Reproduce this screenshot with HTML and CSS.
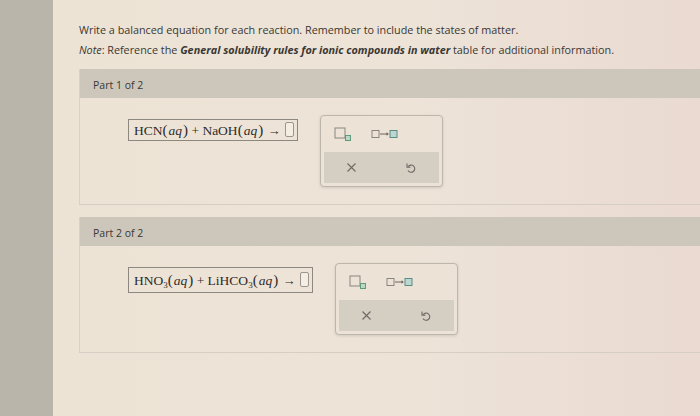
FILE: index.html
```html
<!DOCTYPE html>
<html lang="en">
<head>
    <meta charset="UTF-8">
    <title>Balanced equations</title>
    <link rel="stylesheet" href="styles.css">
</head>
<body>
    <div class="side"></div>
    <div class="main">
        <p class="intro">Write a balanced equation for each reaction. Remember to include the states of matter.</p>
        <p class="intro"><i>Note</i>: Reference the <b><i>General solubility rules for ionic compounds in water</i></b> table for additional information.</p>

        <div class="part">
            <div class="part-head">Part 1 of 2</div>
            <div class="part-body">
                <div class="equation">HCN<span class="paren">(</span><i>aq</i><span class="paren">)</span> + NaOH<span class="paren">(</span><i>aq</i><span class="paren">)</span> <span class="arrow">&rarr;</span> <span class="slot"></span></div>
                <div class="tools">
                    <div class="tools-top">
                        <svg width="18" height="15" viewBox="0 0 18 15">
                            <rect x="1" y="1" width="10" height="10" fill="none" stroke="#8a857e" stroke-width="1"/>
                            <rect x="11.5" y="8.5" width="5" height="5" fill="#bcd6c8" stroke="#5c9c7c" stroke-width="1"/>
                        </svg>
                        <svg width="28" height="10" viewBox="0 0 28 10">
                            <rect x="1" y="1.5" width="7" height="7" fill="none" stroke="#8a857e" stroke-width="1"/>
                            <path d="M9 5h8" stroke="#6a655e" stroke-width="1"/>
                            <path d="M15.5 3.3l2.4 1.7-2.4 1.7z" fill="#6a655e"/>
                            <rect x="19" y="1.5" width="7" height="7" fill="#bcd6d2" stroke="#5c8c88" stroke-width="1"/>
                        </svg>
                    </div>
                    <div class="tools-bottom">
                        <svg width="11" height="11" viewBox="0 0 11 11">
                            <path d="M1.5 1.5l8 8M9.5 1.5l-8 8" stroke="#6d6963" stroke-width="1.1"/>
                        </svg>
                        <svg width="12" height="12" viewBox="0 0 12 12">
                            <path d="M3.2 4.6A3.6 3.6 0 1 1 3 8.4" fill="none" stroke="#6d6963" stroke-width="1.1"/>
                            <path d="M2 1.6v3.6h3.4" fill="none" stroke="#6d6963" stroke-width="1.1"/>
                        </svg>
                    </div>
                </div>
            </div>
        </div>

        <div class="part">
            <div class="part-head">Part 2 of 2</div>
            <div class="part-body">
                <div class="equation eq-wide">HNO<sub>3</sub><span class="paren">(</span><i>aq</i><span class="paren">)</span> + LiHCO<sub>3</sub><span class="paren">(</span><i>aq</i><span class="paren">)</span> <span class="arrow">&rarr;</span> <span class="slot"></span></div>
                <div class="tools">
                    <div class="tools-top">
                        <svg width="18" height="15" viewBox="0 0 18 15">
                            <rect x="1" y="1" width="10" height="10" fill="none" stroke="#8a857e" stroke-width="1"/>
                            <rect x="11.5" y="8.5" width="5" height="5" fill="#bcd6c8" stroke="#5c9c7c" stroke-width="1"/>
                        </svg>
                        <svg width="28" height="10" viewBox="0 0 28 10">
                            <rect x="1" y="1.5" width="7" height="7" fill="none" stroke="#8a857e" stroke-width="1"/>
                            <path d="M9 5h8" stroke="#6a655e" stroke-width="1"/>
                            <path d="M15.5 3.3l2.4 1.7-2.4 1.7z" fill="#6a655e"/>
                            <rect x="19" y="1.5" width="7" height="7" fill="#bcd6d2" stroke="#5c8c88" stroke-width="1"/>
                        </svg>
                    </div>
                    <div class="tools-bottom">
                        <svg width="11" height="11" viewBox="0 0 11 11">
                            <path d="M1.5 1.5l8 8M9.5 1.5l-8 8" stroke="#6d6963" stroke-width="1.1"/>
                        </svg>
                        <svg width="12" height="12" viewBox="0 0 12 12">
                            <path d="M3.2 4.6A3.6 3.6 0 1 1 3 8.4" fill="none" stroke="#6d6963" stroke-width="1.1"/>
                            <path d="M2 1.6v3.6h3.4" fill="none" stroke="#6d6963" stroke-width="1.1"/>
                        </svg>
                    </div>
                </div>
            </div>
        </div>
    </div>
</body>
</html>
```

FILE: styles.css
```css
html, body {
    margin: 0;
    height: 100%;
}
body {
    display: flex;
    font-family: "Open Sans", sans-serif;
    color: #3a3733;
    background: linear-gradient(90deg, #ece3d5 0%, #ede3d7 60%, #eadad2 100%);
    overflow: hidden;
}
.side {
    width: 53px;
    flex: none;
    background: #bab5aa;
}
.main {
    flex: 1;
    padding: 22px 0 0 26px;
}
.intro {
    margin: 0 0 5px;
    font-size: 10.8px;
    line-height: 15px;
}
.part {
    margin-top: 12px;
    border-left: 1px solid #d9d1c5;
    border-bottom: 1px solid #d6cec2;
}
.part + .part {
    margin-top: 12px;
}
.part-head {
    height: 29px;
    line-height: 33px;
    padding-left: 13px;
    font-size: 10.5px;
    background: #cdc7bb;
    color: #3a3733;
}
.part-body {
    height: 106px;
    padding: 17px 0 0 48px;
    box-sizing: border-box;
    display: flex;
    align-items: flex-start;
    gap: 22px;
}
.equation {
    margin-top: 4px;
    height: 20px;
    line-height: 20px;
    padding: 0 3px 0 5px;
    border: 1px solid #8c877f;
    font-family: "Liberation Serif", serif;
    font-size: 13.5px;
    color: #2e2b28;
    white-space: nowrap;
}
.equation i {
    margin: 0 1px;
}
.eq-wide {
    height: 24px;
    line-height: 24px;
}
.equation sub {
    font-size: 9px;
    line-height: 0;
    vertical-align: -3px;
}
.paren {
    font-size: 15px;
}
.arrow {
    font-size: 13px;
    font-weight: bold;
    margin: 0 1px;
}
.slot {
    display: inline-block;
    width: 7px;
    height: 13px;
    vertical-align: -2px;
    border: 1px solid #9a958d;
    border-radius: 2px;
    background: #f3ede3;
}
.tools {
    width: 123px;
    height: 72px;
    padding: 0 3px 3px;
    box-sizing: border-box;
    border: 1px solid #bdb6ab;
    border-radius: 4px;
    background: #ece3d6;
    box-shadow: 0 1px 3px rgba(0, 0, 0, 0.12);
    display: flex;
    flex-direction: column;
}
.tools-top {
    flex: 1;
    display: flex;
    align-items: center;
    gap: 19px;
    padding-left: 10px;
}
.tools-bottom {
    height: 31px;
    background: #d5cec3;
    display: flex;
    align-items: center;
    justify-content: space-between;
    padding: 0 22px;
}
```
